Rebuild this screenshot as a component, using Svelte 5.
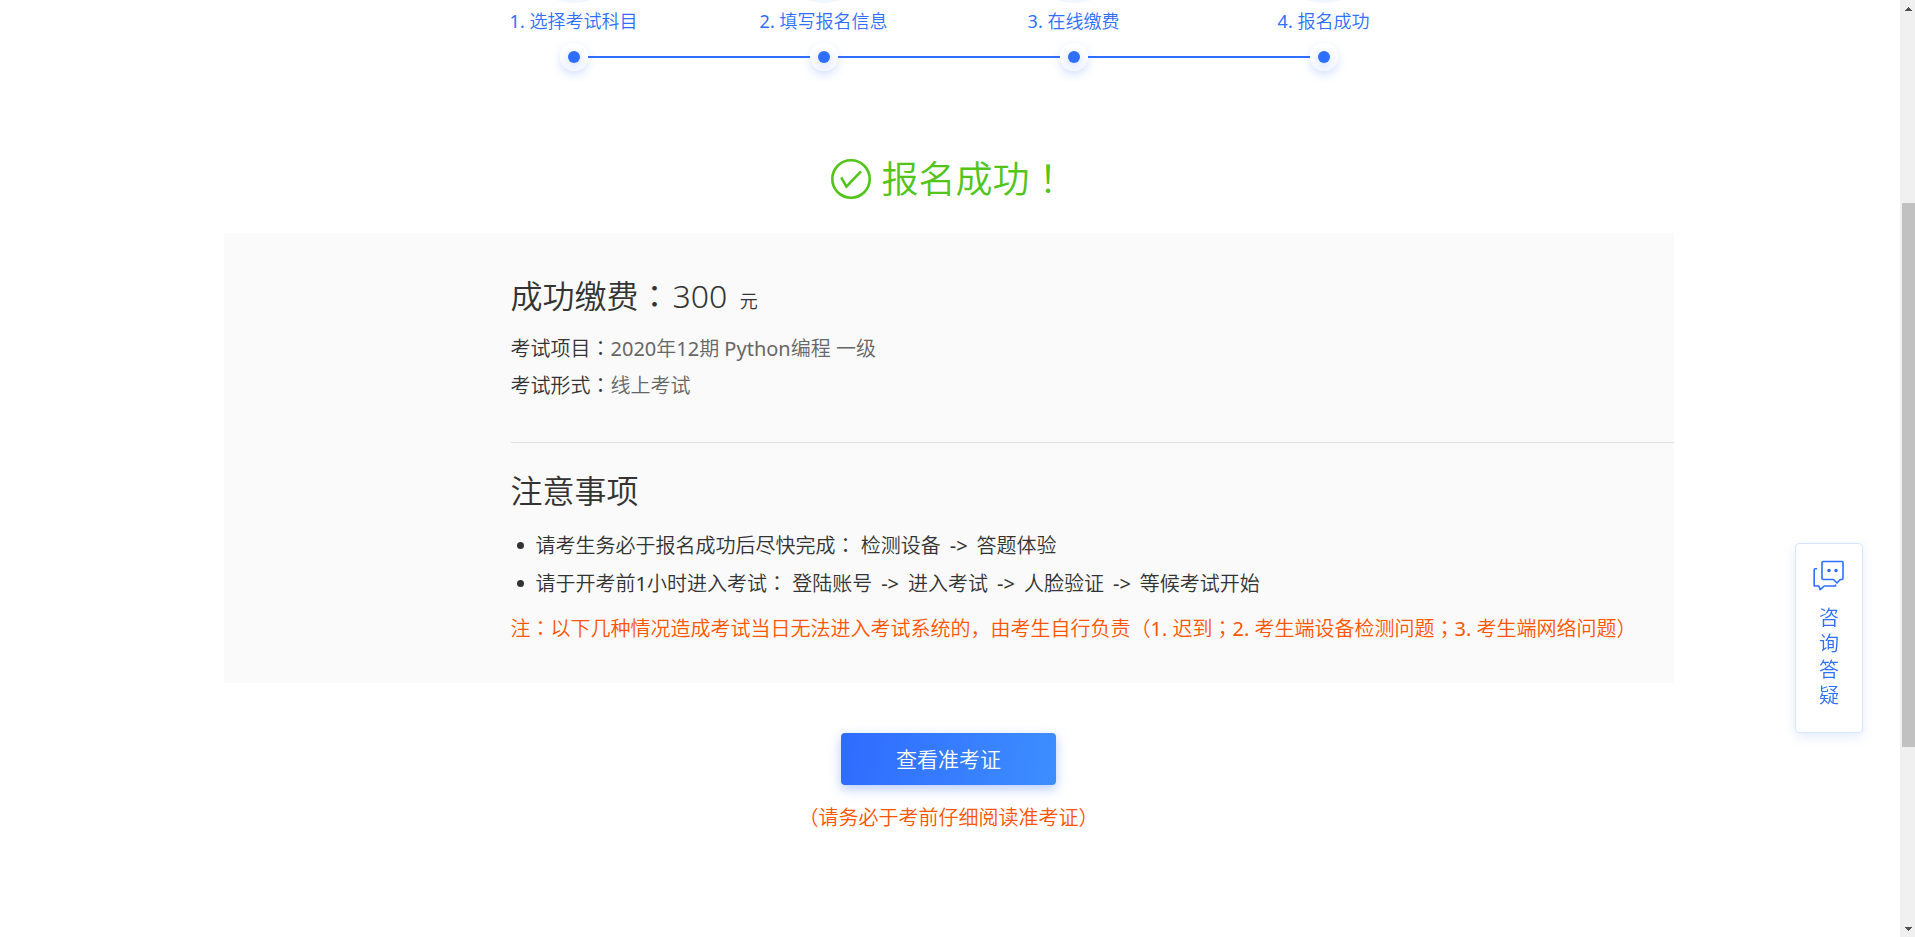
<script>
  const steps = ['选择考试科目', '填写报名信息', '在线缴费', '报名成功'];
</script>

<div class="page">
  <main>
    <ol class="steps">
      {#each steps as step, i}
        <li>
          <span class="badge"></span>
          <span class="label"><span class="num">{i + 1}.</span> {step}</span>
          <span class="track"><i class="rail"></i><span class="node"></span><i class="rail"></i></span>
        </li>
      {/each}
    </ol>

    <h1>
      <svg width="40" height="40" viewBox="0 0 40 40" fill="none" stroke="currentColor" aria-hidden="true">
        <circle cx="20" cy="20" r="18.7" stroke-width="2.6" />
        <path d="M10.2 18.4 15.4 27.6 30 12.4" stroke-width="2.6" />
      </svg>
      <span>报名成功<span class="mid">！</span></span>
    </h1>

    <section class="panel">
      <div class="part">
        <h2>成功缴费<span class="mid">：</span><span class="amount">300</span> <small>元</small></h2>
        <p class="info">考试项目<span class="mid">：</span><span class="value"><span class="num">2020</span>年<span class="num">12</span>期 <span class="num">Python</span>编程 一级</span></p>
        <p class="info">考试形式<span class="mid">：</span><span class="value">线上考试</span></p>
      </div>
      <div class="part notes">
        <h2>注意事项</h2>
        <ul>
          <li>请考生务必于报名成功后尽快完成<span class="mid">：</span> 检测设备<span class="arrow">-&gt;</span>答题体验</li>
          <li>请于开考前<span class="num">1</span>小时进入考试<span class="mid">：</span> 登陆账号<span class="arrow">-&gt;</span>进入考试<span class="arrow">-&gt;</span>人脸验证<span class="arrow">-&gt;</span>等候考试开始</li>
        </ul>
        <p class="warn">注<span class="mid">：</span>以下几种情况造成考试当日无法进入考试系统的，由考生自行负责（<span class="num">1.</span> 迟到<span class="mid">；</span><span class="num">2.</span> 考生端设备检测问题<span class="mid">；</span><span class="num">3.</span> 考生端网络问题）</p>
      </div>
    </section>

    <div class="action">
      <button type="button">查看准考证</button>
      <p class="warn">（请务必于考前仔细阅读准考证）</p>
    </div>
  </main>

  <a class="consult" href="#consult">
    <svg width="32" height="32" viewBox="0 0 32 32" fill="none" stroke="currentColor" stroke-width="1.6" stroke-linejoin="round" stroke-linecap="round" aria-hidden="true">
      <path d="M9 2.5Q9 1.5 10 1.5H29Q30 1.5 30 2.5V18.5Q30 19.5 29 19.5H27.2L24 23 20.5 19.5H10Q9 19.5 9 18.5Z" />
      <path d="M3.5 8.8H2Q1.2 8.8 1.2 9.8V26H5.8L7.2 29.6 11.2 26H22.5V25" />
      <circle cx="16" cy="10.5" r="1" fill="currentColor" />
      <circle cx="23" cy="10.5" r="1" fill="currentColor" />
    </svg>
    <span>咨询答疑</span>
  </a>

  <div class="scrollbar" aria-hidden="true">
    <svg width="7" height="4" viewBox="0 0 7 4" shape-rendering="crispEdges"><path d="M3 0H4V1H5V2H6V3H7V4H0V3H1V2H2V1H3Z" /></svg>
    <div class="thumb"></div>
    <svg width="7" height="4" viewBox="0 0 7 4" shape-rendering="crispEdges"><path d="M0 0H7V1H6V2H5V3H4V4H3V3H2V2H1V1H0Z" /></svg>
  </div>
</div>

<style>
  :global(body) {
    margin: 0;
    background: #fff;
  }

  .page {
    --blue: #2f6fff;
    min-height: 100vh;
    box-sizing: border-box;
    padding-right: 18px;
    overflow: hidden;
    color: #333;
    font: 350 20px/30px "Noto Sans", "Noto Sans CJK SC", sans-serif;
  }

  main {
    max-width: 1450px;
    margin: 0 auto;
  }

  h1, h2, p, ul, ol {
    margin: 0;
    padding: 0;
    font-weight: inherit;
    list-style: none;
  }

  .mid {
    font-family: "Noto Sans CJK JP", sans-serif;
    line-height: 0;
  }

  .num {
    font-weight: 400;
  }

  .steps {
    display: grid;
    grid-template-columns: repeat(4, 1fr);
    max-width: 1000px;
    margin: -97px auto 0;
    color: var(--blue);
  }

  .steps li {
    display: flex;
    flex-direction: column;
    align-items: center;
  }

  .badge {
    width: 100px;
    height: 100px;
    border-radius: 50%;
    background: #f0f7ff;
  }

  .label {
    margin-top: 3px;
    font-size: 18px;
    line-height: 30px;
  }

  .track {
    display: flex;
    align-items: center;
    align-self: stretch;
    margin-top: 7px;
  }

  .rail {
    flex: 1;
    height: 2px;
    background: var(--blue);
  }

  .steps li:first-child .rail:first-child,
  .steps li:last-child .rail:last-child {
    background: none;
  }

  .node {
    display: grid;
    place-items: center;
    width: 28px;
    height: 28px;
    border-radius: 50%;
    background: linear-gradient(#fff 20%, #f6f8ff);
    box-shadow: 0 4px 10px rgba(47, 111, 255, 0.2);
  }

  .node::before {
    content: "";
    width: 12px;
    height: 12px;
    border-radius: 50%;
    background: var(--blue);
    box-shadow: 0 2px 8px rgba(47, 111, 255, 0.2);
  }

  h1 {
    display: flex;
    justify-content: center;
    align-items: center;
    gap: 11px;
    margin-top: 83px;
    color: #52c41a;
    font-size: 37px;
    line-height: 50px;
  }

  .panel {
    margin-top: 29px;
    padding: 38px 0 39px 287px;
    background: #fafafa;
  }

  .part h2 {
    font-size: 32px;
    line-height: 50px;
  }

  .amount {
    margin: 0 2px;
  }

  h2 small {
    margin-left: 2px;
    font-size: 18px;
    line-height: 0;
  }

  .info {
    margin-top: 7px;
  }

  .info:first-of-type {
    margin-top: 13px;
  }

  .value {
    color: #666;
  }

  .notes {
    margin-top: 41px;
    padding-top: 23px;
    border-top: 1px solid #e0e0e0;
  }

  .notes li {
    display: block;
    margin-top: 8px;
    padding-left: 25px;
  }

  .notes ul {
    padding-top: 7px;
  }

  .notes li::before {
    content: "";
    float: left;
    width: 7px;
    height: 7px;
    margin: 11px 0 0 -19px;
    border-radius: 50%;
    background: #333;
  }

  .arrow {
    margin: 0 9px;
    font-weight: 400;
  }

  .warn {
    color: #ff5500;
  }

  .notes .warn {
    margin-top: 15px;
  }

  .action {
    display: flex;
    flex-direction: column;
    align-items: center;
    gap: 18px;
    padding: 50px 0;
  }

  button {
    width: 215px;
    height: 52px;
    padding: 0;
    border: 0;
    border-radius: 4px;
    background: linear-gradient(100deg, #2f6bff, #3d8eff);
    box-shadow: 0 4px 12px rgba(47, 107, 255, 0.35);
    color: #fff;
    font: inherit;
    font-size: 21px;
    cursor: pointer;
  }

  .consult {
    position: fixed;
    top: 543px;
    right: 52px;
    display: flex;
    flex-direction: column;
    align-items: center;
    gap: 13px;
    box-sizing: border-box;
    width: 68px;
    padding: 16px 0 23px;
    border: 1px solid #d9e5ff;
    border-radius: 4px;
    background: #fff;
    box-shadow: 0 4px 12px rgba(47, 111, 255, 0.12);
    color: var(--blue);
    line-height: 26px;
    text-decoration: none;
  }

  .consult span {
    width: 20px;
    word-break: break-all;
  }

  .scrollbar {
    position: fixed;
    inset: 0 0 0 auto;
    display: flex;
    flex-direction: column;
    justify-content: space-between;
    align-items: center;
    box-sizing: border-box;
    width: 15px;
    padding: 7px 0 6px;
    background: #f0f0f0;
    fill: #505050;
  }

  .scrollbar svg {
    margin-left: 2px;
  }

  .thumb {
    position: absolute;
    top: 21.7%;
    right: 0;
    width: 13px;
    height: 58%;
    background: #c1c1c1;
  }
</style>
